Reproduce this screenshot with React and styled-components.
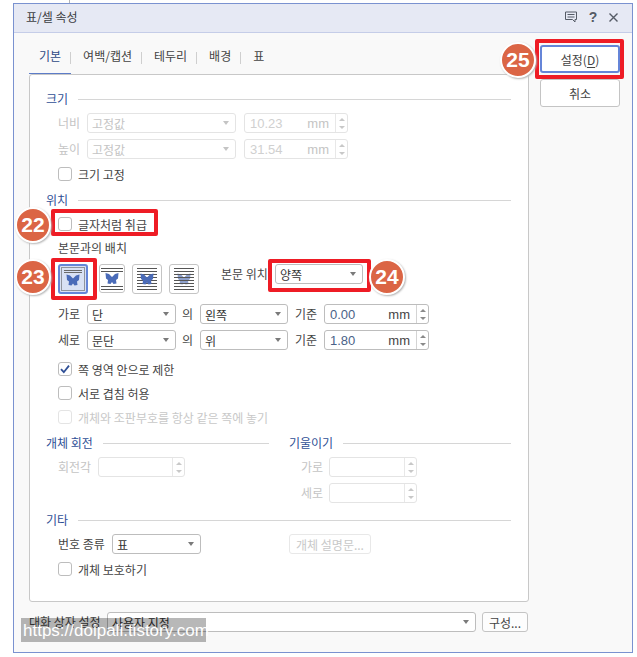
import styled, { createGlobalStyle } from "styled-components";

const GlobalStyle = createGlobalStyle`
    html, body {
        margin: 0;
        background: #FFFFFF;
    }
    * {
        box-sizing: border-box;
    }
`

const Page = styled.div`
    position: relative;
    width: 637px;
    height: 657px;
    overflow: hidden;
    padding: 3px 4px 4px 13px;
    font-family: "Noto Sans CJK KR", "Noto Sans", sans-serif;
    font-size: 12px;
    color: #333333;
`

const Dialog = styled.div`
    width: 620px;
    height: 650px;
    border: 1px solid #7a92d0;
    background: #F9F9F9;
    display: flex;
    flex-direction: column;
`

const TitleBar = styled.div`
    height: 29px;
    flex-shrink: 0;
    padding: 0 14px 4px 12px;
    display: flex;
    align-items: center;
    background: #E6E9F4;
    border-bottom: 1px solid #C5CDE8;
    color: #3c4043;
`

const TitleText = styled.span`
    flex: 1;
`

const TitleIcons = styled.div`
    display: flex;
    align-items: center;
    gap: 10px;
    padding-top: 2px;
    color: #555B66;
`

const Help = styled.span`
    width: 12px;
    text-align: center;
    font: bold 14px "Liberation Sans", sans-serif;
`

const Body = styled.div`
    display: flex;
    padding-left: 15px;
`

const Main = styled.div`
    width: 500px;
`

const Tabs = styled.div`
    display: flex;
    height: 41px;
    padding-top: 14px;
`

const Tab = styled.div`
    height: 27px;
    padding: 1px 10px 0 ${p => (p.$active ? 10 : 12)}px;
    line-height: 15px;
    position: relative;
    color: ${p => (p.$active ? "#2f4a86" : "#444444")};

    ${p => !p.$last && `
        &::after {
            content: "";
            position: absolute;
            right: 0;
            top: 5px;
            height: 12px;
            width: 1px;
            background: #CFCFCF;
        }
    `}

    ${p => p.$active && `border-bottom: 1px solid #5C7CC8;`}
`

const Panel = styled.div`
    height: 528px;
    padding: 0 17px 0 16px;
    background: #FFFFFF;
    border: 1px solid #C8C8C8;
    border-radius: 3px;
    display: flex;
    flex-direction: column;
`

const Heading = styled.div`
    height: 16px;
    margin-top: ${p => p.$mt || 0}px;
    display: flex;
    align-items: center;
    gap: 10px;
    line-height: 16px;
    color: #2f4f96;

    &::after {
        content: "";
        flex: 1;
        height: 1px;
        background: #D6D6D6;
    }
`

const Row = styled.div`
    height: ${p => p.$h || 20}px;
    margin-top: ${p => p.$mt}px;
    padding-left: ${p => (p.$flush ? 0 : 12)}px;
    display: flex;
    align-items: ${p => p.$align || "center"};
`

const Field = styled.span`
    width: ${p => p.$w}px;
    margin-left: ${p => p.$ml || 0}px;
    padding-left: ${p => p.$pl || 0}px;
    flex-shrink: 0;
    line-height: 20px;
    white-space: nowrap;
    color: ${p => (p.$off ? "#C4C4C4" : "#444444")};
`

const Plain = styled.span`
    padding-left: 12px;
    margin-top: 9px;
    height: 16px;
    line-height: 16px;
    color: #444444;
`

const SelectBox = styled.div`
    width: ${p => p.$w}px;
    height: 20px;
    flex-shrink: 0;
    margin-left: ${p => p.$ml || 0}px;
    padding-left: 4px;
    display: flex;
    align-items: center;
    background: #FFFFFF;
    border: 1px solid ${p => (p.$off ? "#E4E4E4" : "#BDBDBD")};
    border-radius: 3px;
    color: ${p => (p.$off ? "#C4C4C4" : "#333333")};
`

const SelectValue = styled.span`
    flex: 1;
    white-space: nowrap;
`

const SelectArrow = styled.span`
    width: 0;
    height: 0;
    margin-right: 6px;
    border-left: 3.5px solid transparent;
    border-right: 3.5px solid transparent;
    border-top: 4px solid ${p => (p.$off ? "#C4C4C4" : "#7A7A7A")};
`

const SpinBox = styled.div`
    width: ${p => p.$w}px;
    height: 20px;
    flex-shrink: 0;
    margin-left: ${p => p.$ml || 0}px;
    padding-left: 5px;
    display: flex;
    align-items: center;
    background: #FFFFFF;
    border: 1px solid ${p => (p.$off ? "#E4E4E4" : "#BDBDBD")};
    border-radius: 3px;
    font-family: "Liberation Sans", sans-serif;
    font-size: 13px;
    color: ${p => (p.$off ? "#D0D0D0" : "#4a6288")};
`

const SpinValue = styled.span`
    flex: 1;
`

const SpinUnit = styled.span`
    margin-right: 6px;
    color: ${p => (p.$off ? "#C4C4C4" : "#444444")};
`

const SpinArrows = styled.div`
    width: 12px;
    height: 100%;
    flex-shrink: 0;
    border-left: 1px solid ${p => (p.$off ? "#E8E8E8" : "#D4D4D4")};
    display: flex;
    flex-direction: column;
    align-items: center;
    justify-content: center;
    gap: 5px;
`

const Tri = styled.span`
    width: 0;
    height: 0;
    border-left: 3px solid transparent;
    border-right: 3px solid transparent;
    ${p => (p.$up ? "border-bottom" : "border-top")}: 3px solid ${p => (p.$off ? "#C8C8C8" : "#8A8A8A")};
`

const CheckRow = styled.label`
    height: 14px;
    margin-top: ${p => p.$mt}px;
    padding-left: 12px;
    display: flex;
    align-items: center;
    gap: 6px;
    color: ${p => (p.$off ? "#C8C8C8" : "#444444")};
`

const Box = styled.span`
    width: 14px;
    height: 14px;
    flex-shrink: 0;
    background: #FFFFFF;
    border: 1px solid ${p => (p.$off ? "#E4E4E4" : "#BDBDBD")};
    border-radius: 3px;
    display: flex;
    align-items: center;
    justify-content: center;
`

const WrapGroup = styled.div`
    display: flex;
`

const WrapButton = styled.div`
    width: ${p => p.$w}px;
    height: ${p => p.$h || 30}px;
    margin-left: ${p => p.$ml || 0}px;
    background: ${p => (p.$on ? "#D9E1F4" : "#FFFFFF")};
    border: ${p => (p.$on ? "2px solid #6585D8" : "1px solid #C4C4C4")};
    border-radius: 3px;
    display: flex;
    align-items: center;
    justify-content: center;
`

const Columns = styled.div`
    display: flex;
    margin-top: 11px;
`

const Column = styled.div`
    width: ${p => p.$w}px;
    margin-left: ${p => p.$ml || 0}px;
    display: flex;
    flex-direction: column;
`

const PushButton = styled.div`
    width: ${p => p.$w}px;
    height: 20px;
    flex-shrink: 0;
    margin-left: ${p => p.$ml || 0}px;
    border: 1px solid ${p => (p.$off ? "#E8E8E8" : "#C4C4C4")};
    border-radius: 3px;
    background: ${p => (p.$off ? "#FFFFFF" : "#FDFDFD")};
    display: flex;
    align-items: center;
    justify-content: center;
    color: ${p => (p.$off ? "#C8C8C8" : "#444444")};
`

const Footer = styled.div`
    height: 20px;
    margin-top: 10px;
    display: flex;
    align-items: center;
`

const Side = styled.div`
    width: 80px;
    margin-left: 11px;
    padding-top: 12px;
    display: flex;
    flex-direction: column;
    gap: 6px;
`

const SideButton = styled.div`
    height: 28px;
    display: flex;
    align-items: center;
    justify-content: center;
    background: #FFFFFF;
    border: ${p => (p.$primary ? "2px solid #6585D8" : "1px solid #C4C4C4")};
    border-radius: 3px;
    color: #444444;

    u {
        text-underline-offset: 2px;
    }
`

const Highlight = styled.div`
    position: absolute;
    left: ${p => p.$x}px;
    top: ${p => p.$y}px;
    width: ${p => p.$w}px;
    height: ${p => p.$h}px;
    border: 4px solid #EE1C25;
    border-radius: 2px;
`

const Badge = styled.div`
    position: absolute;
    left: ${p => p.$x - 18}px;
    top: ${p => p.$y - 18}px;
    width: 36px;
    height: 36px;
    border-radius: 50%;
    background: #DB6545;
    border: 2px solid #FFFFFF;
    box-shadow: 1px 1px 2px 0 #B5B5B5;
    display: flex;
    align-items: center;
    justify-content: center;
    font: bold 21px "Liberation Sans", sans-serif;
    color: #FFFFFF;
`

const Watermark = styled.div`
    position: absolute;
    left: 21px;
    top: 618px;
    width: 185px;
    height: 24px;
    padding-left: 2px;
    background: rgba(0, 0, 0, 0.28);
    font: 17px/25px "Liberation Sans", sans-serif;
    color: #FFFFFF;
    white-space: nowrap;
`

const Tick = styled.div`
    position: absolute;
    left: 69px;
    top: 0;
    width: 1px;
    height: 3px;
    background: #B5B5B5;
`

const Select = ({ w, ml, off, children }) => (
    <SelectBox $w={w} $ml={ml} $off={off}>
        <SelectValue>{children}</SelectValue>
        <SelectArrow $off={off} />
    </SelectBox>
)

const Spin = ({ w, ml, off, unit, children }) => (
    <SpinBox $w={w} $ml={ml} $off={off}>
        <SpinValue>{children}</SpinValue>
        {unit && <SpinUnit $off={off}>{unit}</SpinUnit>}
        <SpinArrows $off={off}>
            <Tri $up $off={off} />
            <Tri $off={off} />
        </SpinArrows>
    </SpinBox>
)

const Check = ({ mt, off, checked, children }) => (
    <CheckRow $mt={mt} $off={off}>
        <Box $off={off}>
            {checked && (
                <svg width="10" height="10" viewBox="0 0 10 10">
                    <path d="M1 5.2 L3.8 8.2 L9 1.6" fill="none" stroke="#2F4F96" strokeWidth="1.8" />
                </svg>
            )}
        </Box>
        {children}
    </CheckRow>
)

const BUTTERFLY = "M-6.5 -5.5 L-3 -4.5 L0 -1.5 L3 -4.5 L6.5 -5.5 L6 0 L4 1.5 L4.5 5 L1.5 5.5 L0 3.5 L-1.5 5.5 L-4.5 5 L-4 1.5 L-6 0 Z"

const Lines = ({ ys, x1, x2, color = "#555555" }) => (
    <g stroke={color} strokeWidth="1">
        {ys.map(y => <line key={y} x1={x1} x2={x2} y1={y} y2={y} />)}
    </g>
)

const THROUGH = [3.5, 6.5, 9.5, 12.5, 15.5, 18.5, 21.5, 24.5]

const WrapIcon = ({ mode, w, h = 28 }) => {
    const cx = w / 2
    const cy = h / 2
    return (
        <svg width={w} height={h} viewBox={`0 0 ${w} ${h}`}>
            {mode === "square" && (
                <>
                    <rect x="1.5" y="1.5" width={w - 3} height={h - 3} fill="none" stroke="#444444" strokeDasharray="1 1" />
                    <Lines ys={[4.5, 6.5]} x1={4} x2={w - 4} color="#6A6A6A" />
                </>
            )}
            {mode === "topbottom" && <Lines ys={[3.5, 6.5, 21.5, 24.5]} x1={1} x2={w - 1} />}
            {mode === "front" && <Lines ys={THROUGH} x1={4} x2={w - 4} />}
            <path
                d={BUTTERFLY}
                transform={`translate(${cx} ${cy + (mode === "square" ? 1 : 0)})`}
                fill={mode === "behind" ? "#8DA0CC" : "#4A6BB8"}
            />
            {mode === "behind" && <Lines ys={THROUGH} x1={4} x2={w - 4} />}
        </svg>
    )
}

export default function App() {
    return (
        <Page>
            <GlobalStyle />
            <Dialog>
                <TitleBar>
                    <TitleText>표/셀 속성</TitleText>
                    <TitleIcons>
                        <svg width="12" height="12" viewBox="0 0 12 12">
                            <path d="M0.5 1 H11.5 V8.5 H10 V11 L7.5 8.5 H0.5 Z M2.5 3.5 H9.5 M2.5 6 H9.5" fill="none" stroke="currentColor" strokeWidth="1" />
                        </svg>
                        <Help>?</Help>
                        <svg width="9" height="9" viewBox="0 0 9 9">
                            <path d="M0.5 0.5 L8.5 8.5 M8.5 0.5 L0.5 8.5" fill="none" stroke="currentColor" strokeWidth="1.4" />
                        </svg>
                    </TitleIcons>
                </TitleBar>
                <Body>
                    <Main>
                        <Tabs>
                            <Tab $active>기본</Tab>
                            <Tab>여백/캡션</Tab>
                            <Tab>테두리</Tab>
                            <Tab>배경</Tab>
                            <Tab $last>표</Tab>
                        </Tabs>
                        <Panel>
                            <Heading $mt={16}>크기</Heading>
                            <Row $mt={6}>
                                <Field $w={29} $off>너비</Field>
                                <Select w={149} off>고정값</Select>
                                <Spin w={104} ml={8} off unit="mm">10.23</Spin>
                            </Row>
                            <Row $mt={6}>
                                <Field $w={29} $off>높이</Field>
                                <Select w={149} off>고정값</Select>
                                <Spin w={104} ml={8} off unit="mm">31.54</Spin>
                            </Row>
                            <Check mt={8}>크기 고정</Check>

                            <Heading $mt={11}>위치</Heading>
                            <Check mt={9}>글자처럼 취급</Check>
                            <Plain>본문과의 배치</Plain>
                            <Row $mt={8} $h={30} $align="flex-start">
                                <WrapGroup>
                                    <WrapButton $w={30} $on><WrapIcon mode="square" w={26} h={26} /></WrapButton>
                                    <WrapButton $w={26} $h={29} $ml={11}><WrapIcon mode="topbottom" w={24} h={27} /></WrapButton>
                                    <WrapButton $w={30} $ml={7}><WrapIcon mode="front" w={28} /></WrapButton>
                                    <WrapButton $w={30} $ml={7}><WrapIcon mode="behind" w={28} /></WrapButton>
                                </WrapGroup>
                                <Field $w={54} $ml={22}>본문 위치</Field>
                                <Select w={88}>양쪽</Select>
                            </Row>
                            <Row $mt={10}>
                                <Field $w={29}>가로</Field>
                                <Select w={89}>단</Select>
                                <Field $w={24} $pl={6}>의</Field>
                                <Select w={88}>왼쪽</Select>
                                <Field $w={36} $pl={7}>기준</Field>
                                <Spin w={105} unit="mm">0.00</Spin>
                            </Row>
                            <Row $mt={6}>
                                <Field $w={29}>세로</Field>
                                <Select w={89}>문단</Select>
                                <Field $w={24} $pl={6}>의</Field>
                                <Select w={88}>위</Select>
                                <Field $w={36} $pl={7}>기준</Field>
                                <Spin w={105} unit="mm">1.80</Spin>
                            </Row>
                            <Check mt={12} checked>쪽 영역 안으로 제한</Check>
                            <Check mt={10}>서로 겹침 허용</Check>
                            <Check mt={10} off>개체와 조판부호를 항상 같은 쪽에 놓기</Check>

                            <Columns>
                                <Column $w={223}>
                                    <Heading>개체 회전</Heading>
                                    <Row $mt={6}>
                                        <Field $w={40} $off>회전각</Field>
                                        <Spin w={87} off />
                                    </Row>
                                </Column>
                                <Column $w={222} $ml={20}>
                                    <Heading>기울이기</Heading>
                                    <Row $mt={6} $flush>
                                        <Field $w={40} $pl={12} $off>가로</Field>
                                        <Spin w={88} off />
                                    </Row>
                                    <Row $mt={6} $flush>
                                        <Field $w={40} $pl={12} $off>세로</Field>
                                        <Spin w={88} off />
                                    </Row>
                                </Column>
                            </Columns>

                            <Heading $mt={9}>기타</Heading>
                            <Row $mt={6}>
                                <Field $w={54}>번호 종류</Field>
                                <Select w={89}>표</Select>
                                <PushButton $w={82} $ml={88} $off>개체 설명문...</PushButton>
                            </Row>
                            <Check mt={8}>개체 보호하기</Check>
                        </Panel>
                        <Footer>
                            <Field $w={78}>대화 상자 설정</Field>
                            <Select w={369}>사용자 지정</Select>
                            <PushButton $w={46} $ml={6}>구성...</PushButton>
                        </Footer>
                    </Main>
                    <Side>
                        <SideButton $primary>설정(<u>D</u>)</SideButton>
                        <SideButton>취소</SideButton>
                    </Side>
                </Body>
            </Dialog>

            <Tick />
            <Highlight $x={535} $y={39} $w={89} $h={40} />
            <Highlight $x={51} $y={209} $w={107} $h={27} />
            <Highlight $x={51} $y={258} $w={46} $h={42} />
            <Highlight $x={268} $y={259} $w={103} $h={33} />
            <Badge $x={518} $y={60}>25</Badge>
            <Badge $x={33} $y={225}>22</Badge>
            <Badge $x={33} $y={277}>23</Badge>
            <Badge $x={387} $y={277}>24</Badge>
            <Watermark>https://doipali.tistory.com</Watermark>
        </Page>
    )
}
